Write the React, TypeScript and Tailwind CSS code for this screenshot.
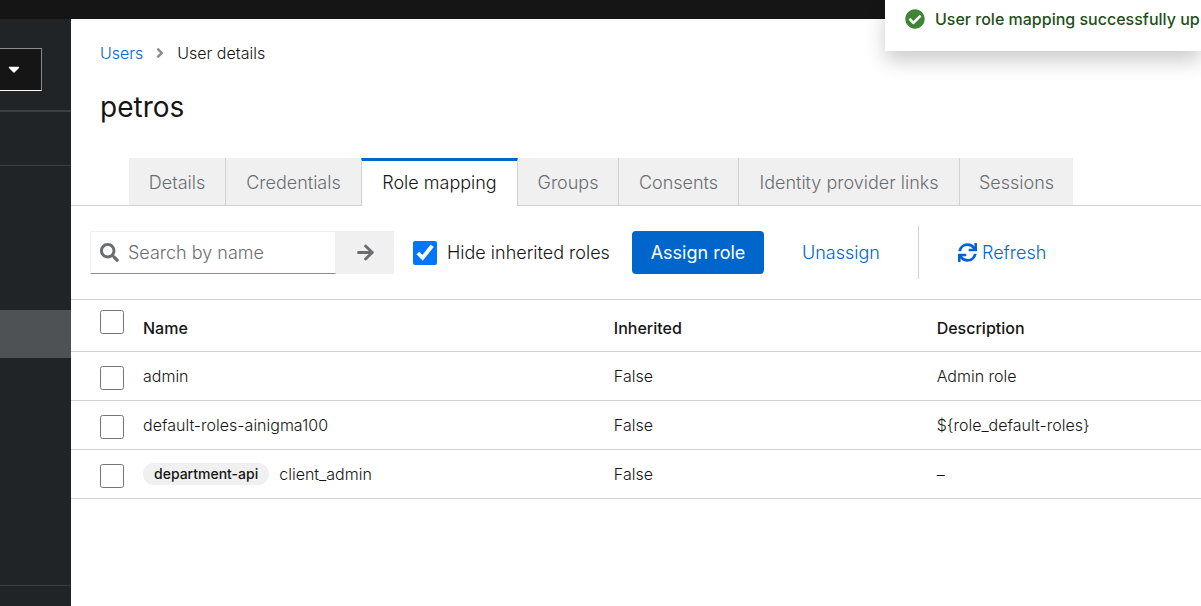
import { FaAngleRight, FaArrowRight, FaCaretDown, FaCheckCircle, FaSearch, FaSync } from "react-icons/fa";

const tabs = ["Details", "Credentials", "Role mapping", "Groups", "Consents", "Identity provider links", "Sessions"];
const activeTab = "Role mapping";

type Role = { name: string; client?: string; inherited: string; description: string };

const roles: Role[] = [
  { name: "admin", inherited: "False", description: "Admin role" },
  { name: "default-roles-ainigma100", inherited: "False", description: "${role_default-roles}" },
  { name: "client_admin", client: "department-api", inherited: "False", description: "–" },
];

function Sidebar() {
  return (
    <aside className="flex w-[71px] shrink-0 flex-col bg-[#212427]">
      <div className="border-b-2 border-[#3c3f42] pt-[29px] pb-[19px]">
        <button
          type="button"
          aria-label="Select realm"
          className="flex h-[43px] w-[42px] items-center border border-l-0 border-[#8a8d90] border-b-white bg-[#151515] pb-[2px] pl-2 text-white"
        >
          <FaCaretDown className="h-[18px] w-3" />
        </button>
      </div>
      <div className="h-[54px] border-b border-[#3c3f42]" />
      <nav className="flex grow flex-col pt-36" aria-label="Main">
        <a href="#users" aria-label="Users" aria-current="page" className="block h-12 bg-[#4f5255]" />
      </nav>
      <div className="h-[21px] border-t border-[#3c3f42]" />
    </aside>
  );
}

function Tabs() {
  return (
    <div className="flex">
      <div className="w-[58px] border-b border-[#d2d2d2]" />
      <div role="tablist" className="grid grid-cols-[96px_136px_157px_100px_120px_221px_114px]">
        {tabs.map((tab) => (
          <button
            key={tab}
            type="button"
            role="tab"
            aria-selected={tab === activeTab}
            className={
              tab === activeTab
                ? "h-12 border-x border-t-3 border-x-[#d2d2d2] border-t-[#0066cc] bg-white pb-[2px] text-lg font-light whitespace-nowrap text-[#151515]"
                : "h-12 border-b border-[#d2d2d2] bg-[#f0f0f0] pt-[2px] text-lg font-light whitespace-nowrap text-[#6a6e73] not-first:border-l [[aria-selected=true]+&]:border-l-0"
            }
          >
            {tab}
          </button>
        ))}
      </div>
      <div className="grow border-b border-[#d2d2d2]" />
    </div>
  );
}

function Toolbar() {
  return (
    <div className="flex h-[93px] items-center pl-[19px] text-lg font-light">
      <form role="search" className="flex h-[43px]" onSubmit={(e) => e.preventDefault()}>
        <label className="flex w-[246px] items-center gap-[9px] border border-[#f0f0f0] border-b-[#8a8d90] pl-[9px] text-[#6a6e73]">
          <FaSearch className="size-[19px] shrink-0" />
          <input
            type="text"
            aria-label="Search by name"
            placeholder="Search by name"
            className="w-full min-w-0 outline-none placeholder:text-[#6a6e73]"
          />
        </label>
        <button type="submit" aria-label="Search" className="flex w-[58px] items-center justify-center bg-[#f0f0f0] text-[#6a6e73]">
          <FaArrowRight className="size-[19px]" />
        </button>
      </form>
      <label className="ml-[19px] flex w-[200px] items-center gap-[10px] whitespace-nowrap text-[#151515]">
        <input type="checkbox" defaultChecked className="size-6 shrink-0 accent-[#0075ff]" />
        Hide inherited roles
      </label>
      <button type="button" className="ml-[19px] h-[43px] w-[132px] rounded bg-[#0066cc] font-normal text-white">
        Assign role
      </button>
      <button type="button" className="ml-[19px] h-[43px] w-[116px] text-[#0066cc]">
        Unassign
      </button>
      <div className="ml-[19px] h-[53px] w-px bg-[#d2d2d2]" />
      <button type="button" className="ml-[39px] flex h-[43px] items-center gap-[5px] text-[#0066cc]">
        <FaSync className="size-[19px]" />
        Refresh
      </button>
    </div>
  );
}

function RolesTable() {
  return (
    <table className="w-full table-fixed text-left text-base font-light text-[#151515]">
      <thead>
        <tr className="h-[52px] border-y border-[#d2d2d2]">
          <th className="w-[72px] pb-2 pl-[29px]">
            <input type="checkbox" aria-label="Select all rows" className="block size-6" />
          </th>
          <th className="w-5/12 pt-1 font-medium">Name</th>
          <th className="w-2/7 pt-1 font-medium">Inherited</th>
          <th className="pt-1 font-medium">Description</th>
        </tr>
      </thead>
      <tbody>
        {roles.map((role) => (
          <tr key={role.name} className="h-[49px] border-b border-[#d2d2d2]">
            <td className="pt-1 pl-[29px]">
              <input type="checkbox" aria-label={`Select ${role.name}`} className="block size-6" />
            </td>
            <td>
              <div className="flex items-center gap-[10px]">
                {role.client && (
                  <span className="flex h-[22px] items-center rounded-full bg-[#f0f0f0] px-[11px] text-sm font-medium">
                    {role.client}
                  </span>
                )}
                {role.name}
              </div>
            </td>
            <td>{role.inherited}</td>
            <td>{role.description}</td>
          </tr>
        ))}
      </tbody>
    </table>
  );
}

export default function App() {
  return (
    <div className="relative flex min-h-screen flex-col overflow-hidden bg-white font-['Inter',sans-serif]">
      <header className="h-[19px] bg-[#151515]" />
      <div className="flex grow">
        <Sidebar />
        <main className="min-w-0 grow">
          <nav aria-label="Breadcrumb" className="flex items-center pt-[22px] pl-[29px] text-base font-light text-[#151515]">
            <a href="#users" className="text-[#0066cc]">
              Users
            </a>
            <FaAngleRight className="mx-[11px] h-4 w-3 text-[#8a8d90]" />
            <span>User details</span>
          </nav>
          <h1 className="pt-6 pb-[33px] pl-[29px] text-[28px] leading-9 text-[#151515]">petros</h1>
          <Tabs />
          <Toolbar />
          <RolesTable />
        </main>
      </div>
      <div
        role="status"
        className="absolute top-0 right-0 flex h-[51px] w-[316px] gap-[10px] bg-white pt-[9px] pl-5 text-base leading-5 font-medium whitespace-nowrap text-[#1e4f18] shadow-[0_10px_20px_rgba(3,3,3,0.2)]"
      >
        <FaCheckCircle className="size-5 shrink-0 text-[#3e8635]" />
        User role mapping successfully up
      </div>
    </div>
  );
}
